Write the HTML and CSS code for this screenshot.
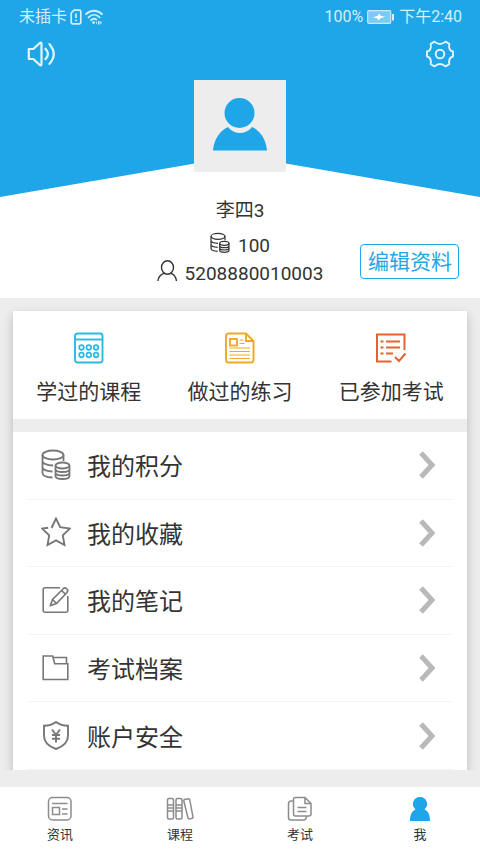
FILE: index.html
```html
<!DOCTYPE html>
<html lang="zh-CN">
<head>
<meta charset="utf-8">
<meta name="viewport" content="width=device-width, initial-scale=1">
<title>我</title>
<link rel="stylesheet" href="styles.css">
</head>
<body>
<svg class="defs" aria-hidden="true">
  <symbol id="coins" viewBox="0 0 30 32">
    <ellipse cx="12" cy="6" rx="10.500" ry="4.500"/>
    <path d="M1.500 6v18c0 2.500 4 4.300 10 4.500M22.500 6v6M1.500 12c0 2.500 4.500 4.500 10.500 4.500M1.500 18c0 2.500 4 4.500 10 4.500"/>
    <ellipse cx="21.500" cy="16.500" rx="7" ry="3"/>
    <path d="M14.500 16.500v10.500c0 2 3 3 7 3s7-1 7-3v-10.500M14.500 20c0 2 3 3 7 3s7-1 7-3M14.500 23.500c0 2 3 3 7 3s7-1 7-3"/>
  </symbol>
  <symbol id="chevron" viewBox="0 0 16 28"><path d="M2 2l11 12L2 26"/></symbol>
</svg>
<div class="app">
  <header class="hero">
    <div class="status">
      <div class="status-group">
        <span>未插卡</span>
        <svg width="12" height="16" viewBox="0 0 12 16"><path d="M4 1.200h5.500a1.300 1.300 0 0 1 1.300 1.300v11a1.300 1.300 0 0 1-1.300 1.300h-7a1.300 1.300 0 0 1-1.300-1.300V4zM6 4.500v4.500M6 10.700v1.500" fill="none" stroke="currentColor" stroke-width="1.700"/></svg>
        <svg width="18" height="16" viewBox="0 0 18 16"><g fill="none" stroke="currentColor" stroke-width="1.800" stroke-linecap="round"><path d="M1 5.200c4.700-4.600 11.300-4.600 16 0M3.500 8.300c3.300-3.200 7.700-3.200 11 0M6 11.100c1.600-1.500 3.700-1.600 5.300-.5"/></g><circle cx="8.600" cy="13.600" r="1.400" fill="currentColor"/><path d="M12 12l-1.200 1.800L12 15.500zM13 12h1.500v3.500H13zM15.300 12l1.700 1.800-1.700 1.700z" fill="currentColor"/></svg>
      </div>
      <div class="status-group">
        <span>100%</span>
        <svg width="28" height="14" viewBox="0 0 28 14"><rect x=".7" y=".7" width="23" height="12.600" rx="1" fill="#7ccbf3" stroke="#c6e9fb" stroke-width="1.200"/><path d="M6 7.500l5-2 1-2 2 2.500 4 .8-5 1.600-1.500 2-1.300-2.200z" fill="#fff"/><path d="M26 4v6.500" stroke="#d8f0fc" stroke-width="2"/></svg>
        <span>下午2:40</span>
      </div>
    </div>
    <div class="toolbar">
      <button class="icon-button" type="button" aria-label="声音"><svg width="28" height="28" viewBox="0 0 28 28" fill="none" stroke="currentColor" stroke-width="2.200" stroke-linejoin="round" stroke-linecap="round"><path d="M1.800 9h4.500l6.500-6q1.700-1.200 1.700 1v20q0 2-1.700 1l-6.500-6H1.800z"/><path d="M18.500 8.700q4.800 5.300 0 10.600M22.500 4.200q8.500 9.800 0 19.600"/></svg></button>
      <button class="icon-button" type="button" aria-label="设置"><svg width="28" height="28" viewBox="0 0 28 28" fill="none" stroke="currentColor" stroke-width="1.900" stroke-linejoin="round"><path d="M8.500 1.600Q14 6.500 19.500 1.600L23.300 3.800Q22.200 10.500 27 11.500V16.500Q22.200 17.500 23.300 24.200L19.500 26.400Q14 21.500 8.500 26.400L4.700 24.200Q5.800 17.500 1 16.500V11.500Q5.800 10.500 4.700 3.800Z"/><circle cx="14" cy="14" r="4.300"/></svg></button>
    </div>
    <svg class="avatar" viewBox="0 0 92 92" role="img" aria-label="头像"><circle cx="45.500" cy="33" r="15" fill="#1ea6e8"/><path d="M19 70.500c1-11 6.500-19.500 15-23.500 6 8 18 8 24 0 8.500 4 14 12.500 15 23.500z" fill="#1ea6e8"/></svg>
    <div class="profile">
      <div class="name">李四3</div>
      <div class="points"><svg width="20" height="22"><use href="#coins"/></svg>100</div>
      <div class="account"><svg width="20" height="22" viewBox="0 0 20 22" fill="none" stroke="currentColor" stroke-width="1.400"><ellipse cx="10.500" cy="7.500" rx="6" ry="6.700"/><path d="M7 13.300C3.500 14.500 1.300 17 .9 21M14 13.300c3.500 1.200 5 3.700 5.400 7.700"/></svg>5208880010003</div>
      <button class="edit" type="button">编辑资料</button>
    </div>
  </header>

  <main class="content">
    <div class="card">
      <nav class="shortcuts" aria-label="学习记录">
        <a href="#courses"><svg width="30" height="32" viewBox="0 0 30 32" fill="none" stroke="#2bb9e0" stroke-width="1.900"><rect x="1" y="1.500" width="27.500" height="29" rx="2.500"/><path d="M1 7.500h27.500"/><g stroke-width="1.700"><circle cx="7.500" cy="15.500" r="2.300"/><circle cx="14.800" cy="15.500" r="2.300"/><circle cx="22.100" cy="15.500" r="2.300"/><circle cx="7.500" cy="23" r="2.300"/><circle cx="14.800" cy="23" r="2.300"/><circle cx="22.100" cy="23" r="2.300"/></g></svg>学过的课程</a>
        <a href="#practice"><svg width="30" height="32" viewBox="0 0 30 32" fill="none" stroke="#edaa27" stroke-width="1.900"><path d="M3.500 1.500H21l7.500 7.500v19a2.500 2.500 0 0 1-2.500 2.500H3.500A2.500 2.500 0 0 1 1 28V4a2.500 2.500 0 0 1 2.500-2.500zM21 1.500V9h7.500"/><rect x="5" y="7" width="7" height="6.500"/><path d="M14.500 8h4M14.500 11.500h5M4.500 16h20.500M4.500 19.500h20.500M4.500 23h20.500M4.500 26.500h20.500" stroke-width="1.200"/></svg>做过的练习</a>
        <a href="#exams"><svg width="30" height="32" viewBox="0 0 30 32" fill="none" stroke="#e5622d" stroke-width="2"><path d="M15.500 29.500H1V2.500h27.500v15.500M10 9.500h14M10 15.500h14M10 21.500h7M4.500 9.500h3M4.500 15.500h3M4.500 21.500h3M19 25l4 4 6.500-7.500"/></svg>已参加考试</a>
      </nav>
      <nav class="menu" aria-label="个人中心">
        <a href="#points"><svg class="menu-icon" viewBox="0 0 30 32"><use href="#coins"/></svg><span>我的积分</span><svg class="chevron"><use href="#chevron"/></svg></a>
        <a href="#favorites"><svg class="menu-icon" viewBox="0 0 30 32"><path d="M10.500 11l4.500-9.500 4.200 8.700 9.600 1.400-7 6.800 1.700 9.600-8.500-4.600L6.500 28l1.700-9.600-7-6.800 6-.9"/></svg><span>我的收藏</span><svg class="chevron"><use href="#chevron"/></svg></a>
        <a href="#notes"><svg class="menu-icon thin" viewBox="0 0 30 32"><path d="M19 3.700H4A1.800 1.800 0 0 0 2.200 5.500v21A1.800 1.800 0 0 0 4 28.300h21a1.800 1.800 0 0 0 1.800-1.800V12M9.500 21.500l2-6L22 5a2.400 2.400 0 0 1 4 3.500L15.500 19.500zM20.500 6.500l4 3.700M11.500 15.500l4 4"/></svg><span>我的笔记</span><svg class="chevron"><use href="#chevron"/></svg></a>
        <a href="#archive"><svg class="menu-icon thin" viewBox="0 0 30 32"><path d="M2.200 4h9.500l2 7.800h13.100v15.700H2.200zM12.200 5.500h13.300v6.300"/></svg><span>考试档案</span><svg class="chevron"><use href="#chevron"/></svg></a>
        <a href="#security"><svg class="menu-icon" viewBox="0 0 30 32"><path d="M15 2c3.500 2.500 7.500 3.700 12 3.700v10c0 6-5 10.800-12 13.300-7-2.500-12-7.300-12-13.300v-10C7.500 5.700 11.500 4.500 15 2zM11 9.500l4 5.500 4-5.500M15 15v7.500M11 15h8M11 18.800h8"/></svg><span>账户安全</span><svg class="chevron"><use href="#chevron"/></svg></a>
      </nav>
    </div>
  </main>

  <nav class="tabs" aria-label="主导航">
    <a href="#news"><svg width="26" height="26" viewBox="0 0 26 26"><rect x="1.500" y="1.500" width="22.500" height="22.500" rx="4"/><path d="M5 7.500h15.500M15 13h5.500M15 18h5.500"/><rect x="5.500" y="11.500" width="7" height="7"/></svg>资讯</a>
    <a href="#course"><svg width="28" height="26" viewBox="0 0 28 26"><rect x="1.500" y="2.500" width="6" height="20.500" rx="1.500"/><rect x="10" y="2.500" width="6" height="20.500" rx="1.500"/><path d="M1.500 9h6M1.500 12h6M1.500 15h6M10 9h6M10 12h6M10 15h6M18.500 3.500l4-.8q1 0 1.200 1L27 21q.1 1-.8 1.300l-3 .6q-1 0-1.200-1L17.800 5q-.1-1 .7-1.500z"/></svg>课程</a>
    <a href="#exam"><svg width="26" height="26" viewBox="0 0 26 26"><path d="M8.500 1.500H18l6 6V18a2 2 0 0 1-2 2H8.500a2 2 0 0 1-2-2V3.500a2 2 0 0 1 2-2zM18 1.500v6h6M10.500 11.500h9M10.500 15.500h9M6.500 5H4a2.500 2.500 0 0 0-2.500 2.500v14A2.500 2.500 0 0 0 4 24h12.500q3 0 3-4"/></svg>考试</a>
    <a href="#me" aria-current="page"><svg class="filled" width="26" height="26" viewBox="0 0 26 26"><path d="M13 1a7 7 0 0 0-4.500 12.400C4.500 15 3 19 3 25h20c0-6-1.500-10-5.500-11.600A7 7 0 0 0 13 1z"/></svg>我</a>
  </nav>
</div>
</body>
</html>
```

FILE: styles.css
```css
* { box-sizing: border-box; }

body {
  margin: 0;
  font-family: Roboto, "Noto Sans CJK SC", sans-serif;
  color: #333;
  background: #ededed;
}

a { color: inherit; text-decoration: none; }
button { font: inherit; padding: 0; cursor: pointer; }
svg { display: block; flex: none; }
.defs { position: absolute; width: 0; height: 0; }
#coins { fill: none; stroke: currentColor; stroke-width: 1.8px; }
#chevron { fill: none; stroke: #b9b9b9; stroke-width: 5px; }

.app {
  display: flex;
  flex-direction: column;
  min-height: 100vh;
}

.hero {
  position: relative;
  z-index: 0;
  background: #fff;
  padding-bottom: 10px;
}

/* Blue banner with a peaked lower edge, behind the avatar */
.hero::before {
  content: "";
  position: absolute;
  z-index: -1;
  inset: 0 0 auto;
  height: 197px;
  background: #1ea6e8;
  clip-path: polygon(0 0, 100% 0, 100% 100%, 50% 79%, 0 100%);
}

.status {
  display: flex;
  justify-content: space-between;
  padding: 5px 18px 0 19px;
  font-size: 16px;
  line-height: 24px;
  color: #d5effc;
}
.status-group { display: flex; align-items: center; gap: 4px; }
.status-group:first-child { gap: 3px; }

.toolbar {
  display: flex;
  justify-content: space-between;
  padding: 11px 26px 0 27px;
  height: 51px;
}
.icon-button {
  width: 28px;
  height: 28px;
  border: 0;
  background: none;
  color: #e5f5fd;
}

.avatar {
  width: 92px;
  height: 92px;
  margin: 0 auto;
  background: #ededed;
}

.profile {
  display: grid;
  grid-template-columns: 1fr auto 1fr;
  justify-items: center;
  align-items: center;
  padding-top: 25px;
  font-size: 19px;
  line-height: 28px;
}
.name, .points, .account { grid-column: 2; }
.name { margin-bottom: 7px; }
.points, .account { display: flex; gap: 8px; }
.edit {
  grid-area: 2 / 3 / 4 / 4;
  justify-self: end;
  align-self: end;
  margin: 0 21px 9px 0;
  padding: 1px 6px 0 7px;
  height: 35px;
  border: 1px solid #1ea6e8;
  border-radius: 4px;
  background: none;
  color: #1ea6e8;
  font-size: 21px;
  line-height: 32px;
}

.content {
  flex: 1;
  display: flex;
  padding: 13px 13px 0;
  margin-bottom: 17px;
  overflow: hidden;
}
.card {
  flex: 1;
  display: flex;
  flex-direction: column;
  gap: 13px;
  box-shadow: 0 4px 10px rgba(0, 0, 0, .22);
  background: #ededed;
}

.shortcuts {
  display: grid;
  grid-template-columns: repeat(3, 1fr);
  padding: 21px 0 11px;
  background: #fff;
}
.shortcuts a {
  display: flex;
  flex-direction: column;
  align-items: center;
  gap: 12px;
  font-size: 21px;
  line-height: 32px;
}

.menu {
  flex: 1;
  display: flex;
  flex-direction: column;
  padding: 0 14px;
  background: #fff;
}
.menu a {
  flex: 1;
  display: flex;
  align-items: center;
  min-height: 56px;
  padding: 0 18px 0 14px;
  border-bottom: 1px solid #f4f4f4;
  font-size: 24px;
  line-height: 36px;
}
.menu span { padding-top: 4px; }
.menu-icon {
  width: 30px;
  height: 32px;
  margin-right: 16px;
  fill: none;
  stroke: currentColor;
  stroke-width: 1.9px;
  color: #777;
}
.thin { stroke-width: 1.6px; }
.chevron { width: 16px; height: 28px; margin-left: auto; }

.tabs {
  display: grid;
  grid-template-columns: repeat(4, 1fr);
  padding: 9px 0 8px;
  background: #fff;
}
.tabs a {
  display: flex;
  flex-direction: column;
  align-items: center;
  gap: 3px;
  font-size: 13px;
  line-height: 20px;
}
.tabs svg { fill: none; stroke: #8c8c8c; stroke-width: 1.5px; }
.tabs .filled { fill: #1ea6e8; stroke: none; }
```
